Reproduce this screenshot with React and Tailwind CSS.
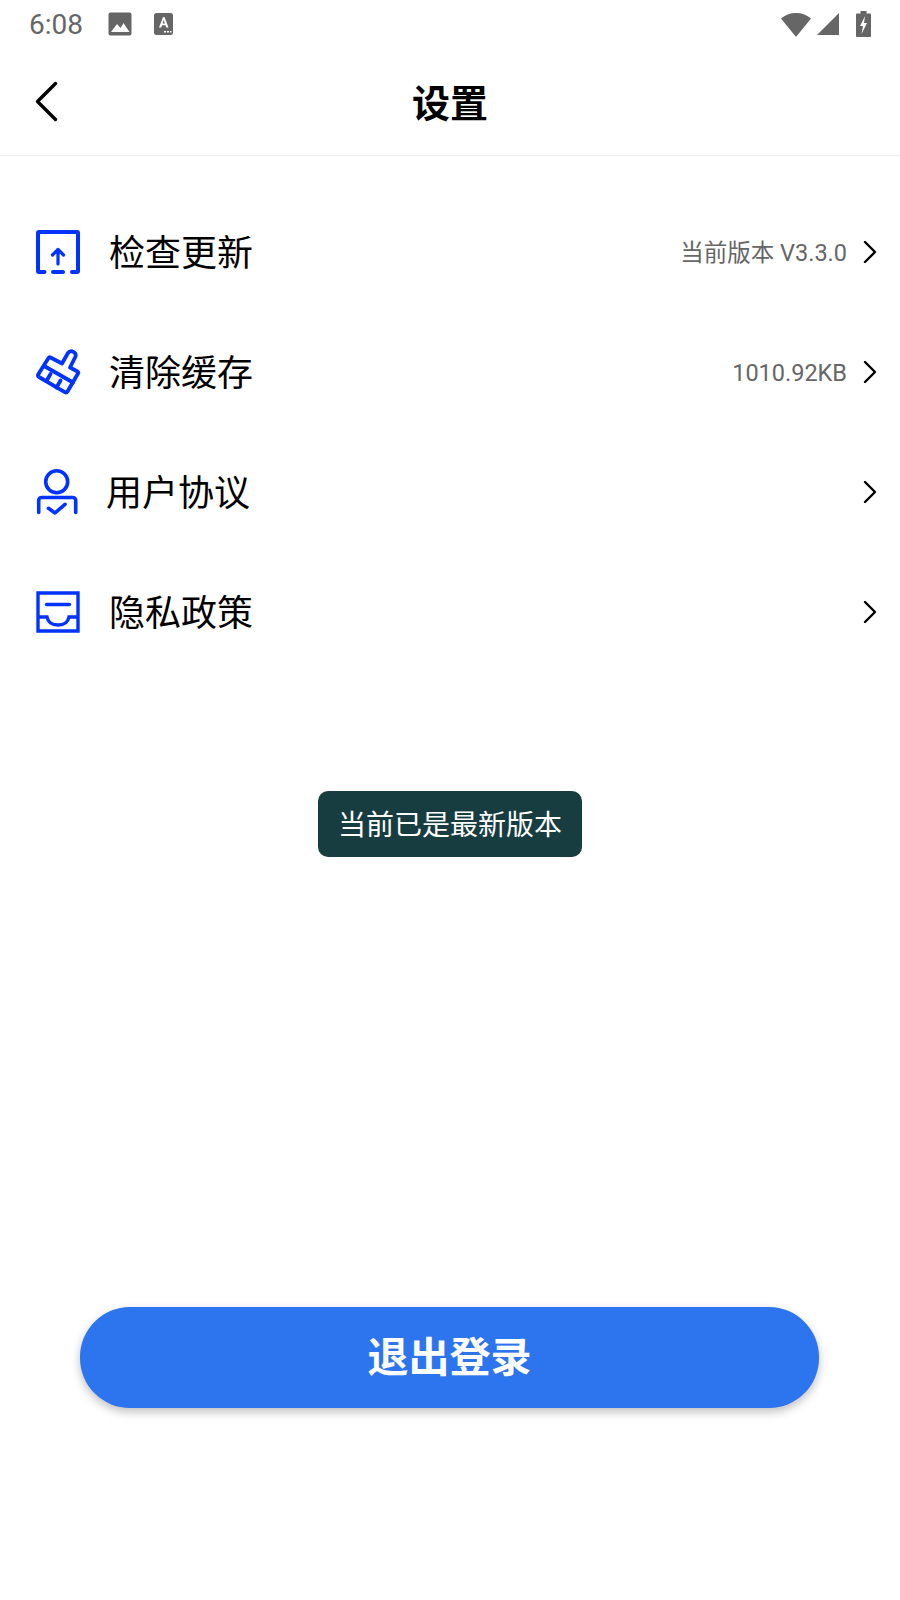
import React from 'react';

const BLUE = '#0033ff';

function UpdateIcon() {
  return (
    <svg className="block" width="44" height="44" viewBox="0 0 44 44" fill="none" stroke={BLUE} strokeWidth="4" strokeLinecap="round" strokeLinejoin="round">
      <path d="M8.500 42H3a1 1 0 0 1-1-1V3a1 1 0 0 1 1-1h38a1 1 0 0 1 1 1v38a1 1 0 0 1-1 1h-5" />
      <path d="M17 42h10" />
      <path d="M22 34V19.500M16.500 25 22 19.500l5.500 5.500" strokeWidth="3.200" />
    </svg>
  );
}

function BroomIcon() {
  return (
    <svg className="block" width="46" height="48" viewBox="0 0 46 48" fill="none" stroke={BLUE} strokeWidth="3.800" strokeLinecap="round" strokeLinejoin="round">
      <path d="M15.500 9.500 27 15.500 33 5a4.200 4.200 0 0 1 7.300 4L35 19.500l7.500 4a1.500 1.500 0 0 1 .5 2L32.500 43.500a2 2 0 0 1-2.700.7L4 29a2 2 0 0 1-.7-2.700L13.500 10a1.500 1.500 0 0 1 2-.5Z" />
      <path d="M10 18.500 38 34.500" />
      <path d="M15.500 26 11.500 33M25.500 32.500 21.500 39.500" />
    </svg>
  );
}

function UserIcon() {
  return (
    <svg className="block" width="42" height="48" viewBox="0 0 42 48" fill="none" stroke={BLUE} strokeWidth="3.600" strokeLinecap="round" strokeLinejoin="round">
      <circle cx="20.700" cy="13.700" r="11" />
      <path d="M2.700 44.500V32.500a3 3 0 0 1 3-3h31a3 3 0 0 1 3 3v12" />
      <path d="M12.500 40.300 19 45l10-8.700" />
    </svg>
  );
}

function DrawerIcon() {
  return (
    <svg className="block" width="44" height="42" viewBox="0 0 44 42" fill="none" stroke={BLUE} strokeWidth="3.400" strokeLinecap="round">
      <path d="M2 2h40v38H2Z" strokeLinecap="butt" />
      <path d="M10.500 13.500h23" />
      <path d="M2 26h9c1 5 5 8 11 8s10-3 11-8h9" strokeLinecap="butt" />
    </svg>
  );
}

function Chevron() {
  return (
    <svg className="block" width="14" height="24" viewBox="0 0 14 24" fill="none" stroke="#000" strokeWidth="2.400" strokeLinecap="round" strokeLinejoin="round">
      <path d="M2 2l10 10L2 22" />
    </svg>
  );
}

const rows = [
  { icon: <UpdateIcon />, iconClass: 'pl-[36px] w-[109px]', label: '检查更新', value: '当前版本 V3.3.0' },
  { icon: <BroomIcon />, iconClass: 'pl-[35px] w-[109px]', label: '清除缓存', value: '1010.92KB' },
  { icon: <UserIcon />, iconClass: 'pl-[36px] w-[106px]', label: '用户协议' },
  { icon: <DrawerIcon />, iconClass: 'pl-[36px] w-[109px]', label: '隐私政策' },
];

export default function App() {
  return (
    <div className="relative h-[1600px] w-[900px] overflow-hidden bg-white font-['Roboto','Noto_Sans_CJK_SC',sans-serif]">
      {/* status bar */}
      <div className="flex h-[52px] items-center pb-[4px] pl-[29px] pr-[29px] text-[#666666]">
        <span className="w-[79px] pt-[1px] text-[28px] leading-none">6:08</span>
        <svg width="24" height="24" viewBox="0 0 24 24">
          <rect x="0.500" y="0.500" width="23" height="23" rx="2" fill="#666" />
          <path d="M3 20l6-8 3.500 4 3-5 6 9Z" fill="#fff" />
        </svg>
        <svg className="ml-[22px]" width="20" height="22" viewBox="0 0 20 22">
          <rect width="19" height="22" rx="2.500" fill="#666" />
          <path d="M5 14.500 9 4h1.500l4 10.500h-2.200l-.8-2.300H8l-.8 2.300Zm3.600-4h2.300L9.700 7Z" fill="#fff" />
          <path d="M10 18h2v1.500h-2zM13 18h2v1.500h-2zM16 18h1.500v1.500H16z" fill="#fff" />
        </svg>
        <svg className="ml-auto" width="32" height="25" viewBox="0 0 32 25">
          <path d="M1 6.500C5 3 10 1 16 1s11 2 15 5.500L16.800 24a1 1 0 0 1-1.600 0Z" fill="#666" />
        </svg>
        <svg className="ml-[5px]" width="23" height="23" viewBox="0 0 23 23">
          <path d="M22 0v22H0Z" fill="#666" />
        </svg>
        <svg className="ml-[16px]" width="15" height="26" viewBox="0 0 15 26">
          <path d="M4.500 0h6v2.500H14a1 1 0 0 1 1 1V25a1 1 0 0 1-1 1H1a1 1 0 0 1-1-1V3.500a1 1 0 0 1 1-1h3.500Z" fill="#666" />
          <path d="M9 5 4 15h3l-1.500 8L11 12H8Z" fill="#fff" />
        </svg>
      </div>

      {/* header */}
      <div className="relative flex h-[104px] items-center justify-center border-b border-[#ececec]">
        <button className="absolute left-[35px] top-[29px]">
          <svg className="block" width="23" height="41" viewBox="0 0 23 41" fill="none" stroke="#000" strokeWidth="3.400" strokeLinecap="round" strokeLinejoin="round">
            <path d="M20.500 2.500 2.500 20.500l18 18" />
          </svg>
        </button>
        <h1 className="text-[38px] font-bold leading-none text-black">设置</h1>
      </div>

      {/* list */}
      <div className="pt-[36px]">
        {rows.map((row) => (
          <div key={row.label} className="flex h-[120px] items-center pr-[23px]">
            <div className={`${row.iconClass} shrink-0`}>{row.icon}</div>
            <span className="pt-[4px] text-[36px] leading-none text-black">{row.label}</span>
            {row.value && <span className="ml-auto pt-[3px] text-[23.500px] leading-none text-[#666666]">{row.value}</span>}
            <span className={`${row.value ? 'ml-[16px] mb-[1px]' : 'ml-auto'} flex`}>
              <Chevron />
            </span>
          </div>
        ))}
      </div>

      {/* toast */}
      <div className="absolute left-[318px] top-[791px] flex h-[66px] w-[264px] items-center justify-center rounded-[10px] bg-[#183d41] pt-[3px] text-[28px] leading-none text-white">
        当前已是最新版本
      </div>

      {/* logout */}
      <div className="ml-[80px] mt-[635px]">
        <button className="flex h-[101px] w-[739px] items-center justify-center rounded-[50px] bg-[#2d74ef] pt-[2px] text-[41px] font-bold leading-none text-white shadow-[0_4px_10px_rgba(0,0,0,0.25)]">
          退出登录
        </button>
      </div>
    </div>
  );
}
